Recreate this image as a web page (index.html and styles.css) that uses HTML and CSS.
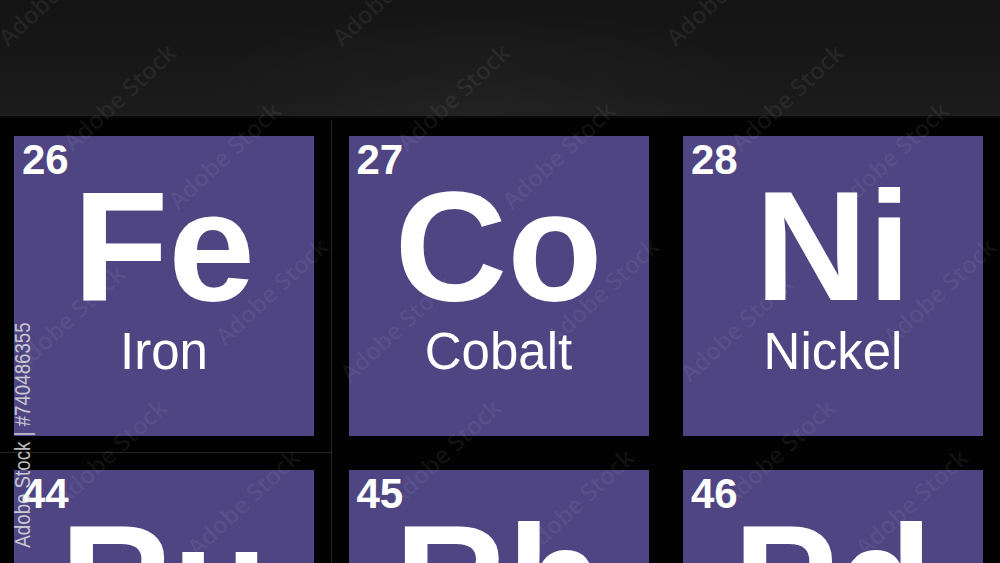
FILE: index.html
```html
<!DOCTYPE html>
<html lang="en">
<head>
<meta charset="utf-8">
<title>Periodic table – Fe Co Ni</title>
<link rel="stylesheet" href="styles.css">
</head>
<body>
<div class="page">
  <div class="top-band"></div>
  <div class="grid">
    <div class="tile"><div class="num">26</div><div class="sym">Fe</div><div class="name">Iron</div></div>
    <div class="tile"><div class="num">27</div><div class="sym">Co</div><div class="name">Cobalt</div></div>
    <div class="tile"><div class="num">28</div><div class="sym">Ni</div><div class="name">Nickel</div></div>
    <div class="tile"><div class="num">44</div><div class="sym">Ru</div><div class="name">Ruthenium</div></div>
    <div class="tile"><div class="num">45</div><div class="sym">Rh</div><div class="name">Rhodium</div></div>
    <div class="tile"><div class="num">46</div><div class="sym">Pd</div><div class="name">Palladium</div></div>
  </div>

  <div class="frame-line frame-v"></div>
  <div class="frame-line frame-h"></div>

  <div class="marks">
    <span class="wm" style="left:10px;top:50px">Adobe Stock</span>
    <span class="wm" style="left:75px;top:155px">Adobe Stock</span>
    <span class="wm" style="left:180px;top:213px">Adobe Stock</span>
    <span class="wm" style="left:24px;top:376px">Adobe Stock</span>
    <span class="wm" style="left:227px;top:349px">Adobe Stock</span>
    <span class="wm" style="left:66px;top:510px">Adobe Stock</span>
    <span class="wm" style="left:199px;top:560px">Adobe Stock</span>

    <span class="wm" style="left:344px;top:50px">Adobe Stock</span>
    <span class="wm" style="left:409px;top:155px">Adobe Stock</span>
    <span class="wm" style="left:514px;top:213px">Adobe Stock</span>
    <span class="wm" style="left:352px;top:386px">Adobe Stock</span>
    <span class="wm" style="left:558px;top:349px">Adobe Stock</span>
    <span class="wm" style="left:400px;top:510px">Adobe Stock</span>
    <span class="wm" style="left:533px;top:560px">Adobe Stock</span>

    <span class="wm" style="left:678px;top:50px">Adobe Stock</span>
    <span class="wm" style="left:743px;top:155px">Adobe Stock</span>
    <span class="wm" style="left:848px;top:213px">Adobe Stock</span>
    <span class="wm" style="left:692px;top:386px">Adobe Stock</span>
    <span class="wm" style="left:895px;top:349px">Adobe Stock</span>
    <span class="wm" style="left:734px;top:510px">Adobe Stock</span>
    <span class="wm" style="left:867px;top:560px">Adobe Stock</span>
  </div>

  <span class="credit">Adobe Stock | #740486355</span>
</div>
</body>
</html>
```

FILE: styles.css
```css
* { box-sizing: border-box; }

html, body {
  margin: 0;
  padding: 0;
  background: #000;
}

body {
  width: 1000px;
  height: 563px;
  overflow: hidden;
  font-family: "Liberation Sans", Arial, sans-serif;
}

.page {
  position: relative;
  width: 1000px;
  height: 563px;
  overflow: hidden;
  background: #020202;
}

.top-band {
  height: 118px;
  background:
    radial-gradient(ellipse 420px 160px at 480px 110px, rgba(255,255,255,0.03), rgba(255,255,255,0) 70%),
    linear-gradient(180deg, #141414 0%, #1a1a1a 85%, #1c1c1c 100%);
  border-bottom: 2px solid #0a0a0a;
}

.grid {
  display: grid;
  grid-template-columns: repeat(3, 300px);
  column-gap: 34.5px;
  row-gap: 34px;
  padding: 18px 0 0 14px;
}

.tile {
  width: 300px;
  height: 300px;
  background: #4e4582;
  color: #fff;
  display: flex;
  flex-direction: column;
}

.num {
  font-weight: 700;
  font-size: 42px;
  line-height: 42px;
  padding: 3px 0 0 8px;
}

.sym {
  font-weight: 700;
  font-size: 156px;
  line-height: 120px;
  text-align: center;
  margin-top: 5px;
}

.name {
  font-weight: 400;
  font-size: 51px;
  line-height: 50px;
  text-align: center;
  margin-top: 21px;
}

.frame-line {
  position: absolute;
  background: rgba(120, 120, 120, 0.3);
}

.frame-v {
  left: 331px;
  top: 120px;
  width: 1px;
  height: 443px;
}

.frame-h {
  left: 0;
  top: 452px;
  width: 332px;
  height: 1px;
}

.marks {
  position: absolute;
  inset: 0;
  pointer-events: none;
}

.wm {
  position: absolute;
  font-family: "Open Sans", "Liberation Sans", sans-serif;
  font-weight: 600;
  font-size: 24px;
  line-height: 24px;
  white-space: nowrap;
  color: rgba(255, 255, 255, 0.065);
  transform-origin: 0 100%;
  transform: translateY(-24px) rotate(-43deg);
}

.credit {
  position: absolute;
  left: 23px;
  top: 435px;
  font-family: "Liberation Sans", Arial, sans-serif;
  font-size: 22px;
  line-height: 22px;
  white-space: nowrap;
  color: rgba(225, 225, 225, 0.85);
  transform: translate(-50%, -50%) rotate(-90deg) scaleX(0.85);
}
```
